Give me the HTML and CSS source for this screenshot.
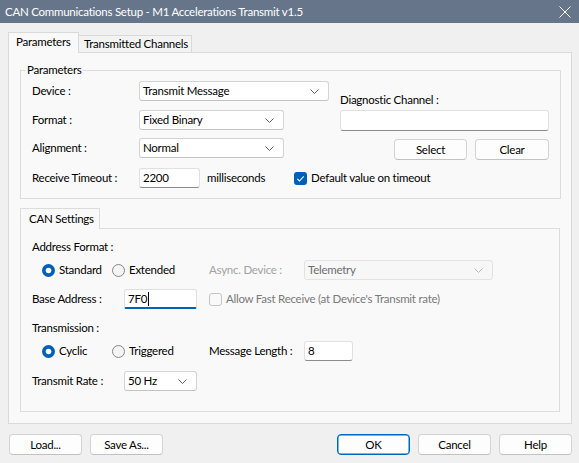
FILE: index.html
```html
<!DOCTYPE html>
<html>
<head>
<meta charset="utf-8">
<title>CAN Communications Setup</title>
<link rel="stylesheet" href="styles.css">
</head>
<body>
<div class="titlebar">
  <span class="title">CAN Communications Setup - M1 Accelerations Transmit v1.5</span>
  <svg class="close" width="12" height="12" viewBox="0 0 12 12"><path d="M0.5 0.5 L11.5 11.5 M11.5 0.5 L0.5 11.5" stroke="#fff" stroke-width="1" fill="none"/></svg>
</div>
<div class="main">
  <div class="tabs">
    <div class="tab active">Parameters</div>
    <div class="tab second">Transmitted Channels</div>
  </div>
  <div class="panel">
    <fieldset class="group">
      <legend>Parameters</legend>
      <div class="params-top">
        <div class="params-left">
          <div class="row">
            <span class="lbl w107">Device :</span>
            <div class="combo w190"><span>Transmit Message</span><svg class="chev" width="9" height="5" viewBox="0 0 9 5"><polyline points="0.5,0.5 4.5,4.5 8.5,0.5" fill="none" stroke="#606060"/></svg></div>
          </div>
          <div class="row mt9">
            <span class="lbl w107">Format :</span>
            <div class="combo w145"><span>Fixed Binary</span><svg class="chev" width="9" height="5" viewBox="0 0 9 5"><polyline points="0.5,0.5 4.5,4.5 8.5,0.5" fill="none" stroke="#606060"/></svg></div>
          </div>
          <div class="row mt8">
            <span class="lbl w107">Alignment :</span>
            <div class="combo w145"><span>Normal</span><svg class="chev" width="9" height="5" viewBox="0 0 9 5"><polyline points="0.5,0.5 4.5,4.5 8.5,0.5" fill="none" stroke="#606060"/></svg></div>
          </div>
        </div>
        <div class="diag">
          <div class="diag-label">Diagnostic Channel :</div>
          <div class="input diag-input"></div>
          <div class="diag-btns">
            <div class="btn w73">Select</div>
            <div class="btn w74">Clear</div>
          </div>
        </div>
      </div>
      <div class="row mt8">
        <span class="lbl w107">Receive Timeout :</span>
        <div class="input w61">2200</div>
        <span class="unit">milliseconds</span>
        <svg class="check" width="13" height="13" viewBox="0 0 13 13"><rect x="0" y="0" width="13" height="13" rx="3" fill="#005fb8"/><path d="M3.3 6.8 L5.5 9 L9.7 4.4" fill="none" stroke="#fff" stroke-width="1.1"/></svg>
        <span class="check-text">Default value on timeout</span>
      </div>
    </fieldset>

    <div class="subtabs">
      <div class="tab active sub">CAN Settings</div>
    </div>
    <div class="subpanel">
      <div class="line">Address Format :</div>
      <div class="row mt5">
        <div class="radios">
          <span class="radio-opt w70"><svg class="radio" width="13" height="13" viewBox="0 0 13 13"><circle cx="6.5" cy="6.5" r="6.5" fill="#005fb8"/><circle cx="6.5" cy="6.5" r="2.8" fill="#fff"/></svg>Standard</span>
          <span class="radio-opt"><svg class="radio" width="13" height="13" viewBox="0 0 13 13"><circle cx="6.5" cy="6.5" r="6" fill="#f4f4f4" stroke="#868686"/></svg>Extended</span>
        </div>
        <span class="lbl w95 disabled">Async. Device :</span>
        <div class="combo w189 combo-disabled"><span>Telemetry</span><svg class="chev" width="9" height="5" viewBox="0 0 9 5"><polyline points="0.5,0.5 4.5,4.5 8.5,0.5" fill="none" stroke="#b8b8b8"/></svg></div>
      </div>
      <div class="row mt9">
        <span class="lbl w92">Base Address :</span>
        <div class="input w73 focused"><span>7F0</span><span class="caret"></span></div>
        <svg class="check ml12" width="13" height="13" viewBox="0 0 13 13"><rect x="0.5" y="0.5" width="12" height="12" rx="2.5" fill="#f9f9f9" stroke="#c4c4c4"/></svg>
        <span class="check-text disabled-text">Allow Fast Receive (at Device's Transmit rate)</span>
      </div>
      <div class="line mt11">Transmission :</div>
      <div class="row mt5">
        <div class="radios">
          <span class="radio-opt w70"><svg class="radio" width="13" height="13" viewBox="0 0 13 13"><circle cx="6.5" cy="6.5" r="6.5" fill="#005fb8"/><circle cx="6.5" cy="6.5" r="2.8" fill="#fff"/></svg>Cyclic</span>
          <span class="radio-opt"><svg class="radio" width="13" height="13" viewBox="0 0 13 13"><circle cx="6.5" cy="6.5" r="6" fill="#f4f4f4" stroke="#868686"/></svg>Triggered</span>
        </div>
        <span class="lbl w95">Message Length :</span>
        <div class="input w49">8</div>
      </div>
      <div class="row mt10">
        <span class="lbl w92">Transmit Rate :</span>
        <div class="combo w73"><span>50 Hz</span><svg class="chev" width="9" height="5" viewBox="0 0 9 5"><polyline points="0.5,0.5 4.5,4.5 8.5,0.5" fill="none" stroke="#606060"/></svg></div>
      </div>
    </div>
  </div>
  <div class="footer">
    <div class="footer-left">
      <div class="btn w73">Load...</div>
      <div class="btn w73">Save As...</div>
    </div>
    <div class="footer-right">
      <div class="btn w73 default">OK</div>
      <div class="btn w73">Cancel</div>
      <div class="btn w73">Help</div>
    </div>
  </div>
</div>
</body>
</html>
```

FILE: styles.css
```css
* { box-sizing: border-box; }
html, body { margin: 0; padding: 0; }
body {
  width: 579px;
  height: 463px;
  overflow: hidden;
  background: #f0f0f0;
  font-family: Lato, "Liberation Sans", sans-serif;
  font-size: 11.5px;
  letter-spacing: -0.25px;
  line-height: 16px;
  color: #000;
}
.titlebar {
  height: 23px;
  background: #667589;
  color: #fff;
  display: flex;
  align-items: center;
  justify-content: space-between;
  padding: 0 8px 0 5px;
}
.close { display: block; }
.main { padding: 9px 7px 0 8px; }

.tabs { display: flex; align-items: flex-start; height: 21px; margin-bottom: -1px; }
.tab {
  height: 17px;
  margin-top: 3px;
  padding: 0 0 0 5px;
  border: 1px solid #d9d9d9;
  border-left: none;
  border-bottom: none;
  background: #f3f3f3;
  line-height: 16px;
}
.tab.second { width: 113px; }
.tab.active {
  position: relative;
  z-index: 1;
  height: 21px;
  margin-top: 0;
  width: 71px;
  padding: 1px 0 0 7px;
  border-left: 1px solid #d9d9d9;
  background: #f9f9f9;
}
.panel {
  width: 564px;
  height: 372px;
  border: 1px solid #d9d9d9;
  background: #f9f9f9;
  padding: 9px 10px 0 11px;
}
.group {
  margin: 0;
  width: 541px;
  border: 1px solid #dcdcdc;
  padding: 3px 11px 10px 11px;
  min-width: 0;
}
.group legend {
  padding: 0 1px;
  margin-left: -6px;
  line-height: 16px;
}
.params-top { display: flex; }
.params-left { width: 308px; }
.row { display: flex; align-items: center; height: 20px; }
.mt5 { margin-top: 5px; }
.mt8 { margin-top: 8px; }
.mt9 { margin-top: 9px; }
.mt10 { margin-top: 10px; }
.mt11 { margin-top: 11px; }
.ml12 { margin-left: 12px; }
.lbl { flex: none; }
.w61 { width: 61px; }
.w70 { width: 70px; }
.w73 { width: 73px; }
.w74 { width: 74px; }
.w49 { width: 49px; }
.w92 { width: 92px; }
.w95 { width: 95px; }
.w107 { width: 107px; }
.w145 { width: 145px; }
.w189 { width: 189px; }
.w190 { width: 190px; }

.combo {
  flex: none;
  height: 20px;
  background: #fff;
  border: 1px solid #d4d4d4;
  border-bottom-color: #c4c4c4;
  border-radius: 3px;
  display: flex;
  align-items: center;
  justify-content: space-between;
  padding: 0 9px 0 3px;
}
.chev { display: block; }
.combo-disabled { background: #f7f7f7; border-color: #e3e3e3; color: #6e6e6e; }

.input {
  flex: none;
  height: 20px;
  background: #fff;
  border: 1px solid #e0e0e0;
  border-bottom-color: #8c8c8c;
  border-radius: 3px;
  padding: 0 3px;
  display: flex;
  align-items: center;
}
.input.focused { border-bottom: 2px solid #005fb8; border-radius: 3px 3px 2px 2px; padding-top: 1px; }
.caret { width: 1px; height: 14px; background: #000; margin-left: 1px; }

.diag { flex: 1; padding-top: 11px; }
.diag-label { line-height: 16px; }
.diag-input { margin-top: 2px; height: 21px; width: 100%; }
.diag-btns { display: flex; justify-content: flex-end; gap: 8px; margin-top: 8px; }

.unit { width: 87px; margin-left: 7px; flex: none; }
.check { display: block; flex: none; }
.check-text { margin-left: 4px; }

.btn {
  flex: none;
  height: 21px;
  background: #fdfdfd;
  border: 1px solid #d3d3d3;
  border-bottom-color: #c2c2c2;
  border-radius: 4px;
  text-align: center;
  line-height: 19px;
}
.btn.default { border-color: #0067c0; box-shadow: inset 0 0 0 0.5px #0067c0; }

.subtabs { display: flex; height: 21px; margin-top: 9px; margin-bottom: -1px; }
.tab.sub { width: 80px; padding-left: 8px; padding-top: 2px; border-color: #dcdcdc; }
.subpanel {
  width: 540px;
  height: 184px;
  border: 1px solid #dcdcdc;
  background: #f9f9f9;
  padding: 10px 11px 0 11px;
}
.line { line-height: 16px; }
.radios { width: 177px; flex: none; display: flex; padding-left: 10px; }
.radio-opt { display: flex; align-items: center; flex: none; }
.radio { display: block; margin-right: 4px; flex: none; }
.disabled { color: #a2a2a2; }
.disabled-text { color: #7a7a7a; }

.footer { display: flex; justify-content: space-between; margin-top: 10px; padding-left: 1px; }
.footer-left, .footer-right { display: flex; gap: 8px; }
```
